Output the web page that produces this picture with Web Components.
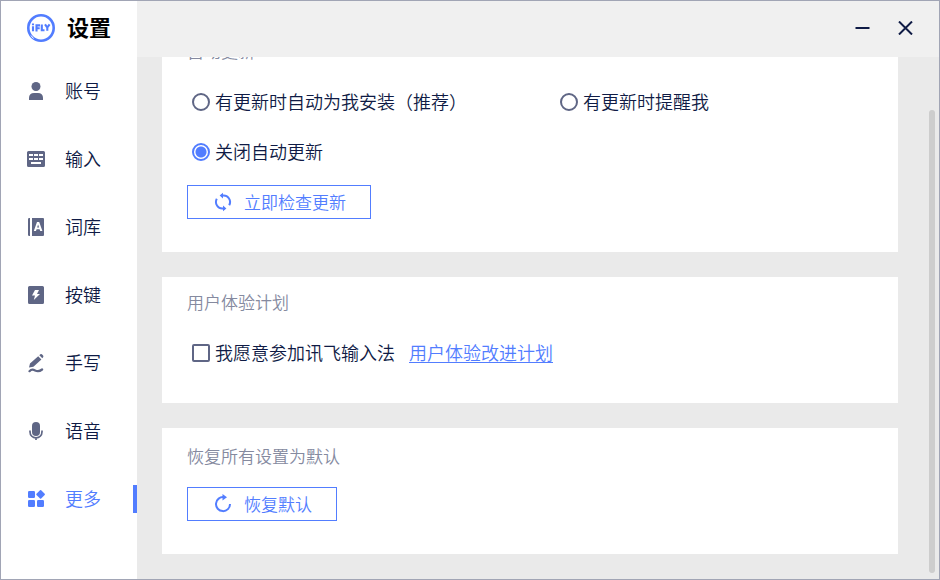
<!DOCTYPE html>
<html lang="zh-CN">
<head>
<meta charset="utf-8">
<title>设置</title>
<style>
  html, body { height: 100%; margin: 0; }
  body {
    --blue: #527dff;
    --ink: #0f1b45;
    --slate: #5f6685;
    --muted: #858a9f;
    font-family: "Noto Sans CJK SC", "Noto Sans", sans-serif;
    font-weight: 350;
    font-size: 18px;
    line-height: 24px;
    color: var(--ink);
  }
</style>
</head>
<body>
<settings-window>
  <side-bar slot="side">
    <brand-mark slot="brand">设置</brand-mark>
    <nav-item icon="account">账号</nav-item>
    <nav-item icon="keyboard">输入</nav-item>
    <nav-item icon="lexicon">词库</nav-item>
    <nav-item icon="keys">按键</nav-item>
    <nav-item icon="pen">手写</nav-item>
    <nav-item icon="voice">语音</nav-item>
    <nav-item icon="more" active>更多</nav-item>
  </side-bar>
  <window-bar slot="bar"></window-bar>
  <scroll-pane>
    <setting-card heading="自动更新">
      <update-choices></update-choices>
      <action-button icon="sync" wide>立即检查更新</action-button>
    </setting-card>
    <setting-card heading="用户体验计划">
      <check-option>我愿意参加讯飞输入法<a slot="more" href="#plan">用户体验改进计划</a></check-option>
    </setting-card>
    <setting-card heading="恢复所有设置为默认" compact>
      <action-button icon="reset">恢复默认</action-button>
    </setting-card>
  </scroll-pane>
</settings-window>

<script>
const icons = {
  account: '<circle cx="10" cy="5.500" r="4.500"/><path d="M3 19v-2.200C3 13.800 5 12 8 12h4c3 0 5 1.800 5 4.800V19z"/>',
  keyboard: '<path fill-rule="evenodd" d="M2.500 2h15A1.500 1.500 0 0 1 19 3.500v13a1.500 1.500 0 0 1-1.500 1.500h-15A1.500 1.500 0 0 1 1 16.500v-13A1.500 1.500 0 0 1 2.500 2zM3 5v2h4V5zm5 0v2h4V5zm5 0v2h4V5zM3 9v2h4V9zm5 0v2h4V9zm5 0v2h4V9zM5 13v2h10v-2z"/>',
  lexicon: '<path d="M3.200 1H4v18h-.8A1.200 1.200 0 0 1 2 17.800V2.200A1.200 1.200 0 0 1 3.200 1z"/><path fill-rule="evenodd" d="M6 1h11a1 1 0 0 1 1 1v16a1 1 0 0 1-1 1H6zM11 5 7.800 14H10l.6-1.700h3l.6 1.700h2.200L13.200 5zm1.100 2.600 1 3h-2z"/>',
  keys: '<path fill-rule="evenodd" d="M3.500 1h13A1.500 1.500 0 0 1 18 2.500v15a1.500 1.500 0 0 1-1.500 1.500h-13A1.500 1.500 0 0 1 2 17.500v-15A1.500 1.500 0 0 1 3.500 1zM9 5 6 10.500h3L7.800 15 14 9h-3l2-4z"/>',
  pen: '<path d="m12.200 3.200 3.200 3.200-8 7.400L3 14.600l1-4zM13.300 2.200l1-.9q.8-.6 1.600 0l1.200 1.200q.7.800 0 1.700l-.8 1z"/><path d="M3.500 18.200c1.800-2 3.800-1.700 5.600-.8 2 1 4.500 1 7-.9" fill="none" stroke="currentColor" stroke-width="2.200" stroke-linecap="round"/>',
  voice: '<rect x="6" y="1" width="8" height="14" rx="4"/><path d="M4 9.500v1.300c0 3.700 2.700 6 6 6s6-2.300 6-6V9.500M10 17v2" fill="none" stroke="currentColor" stroke-width="1.700"/>',
  more: '<rect x="2" y="2" width="7" height="7" rx="1.200"/><rect x="2" y="11" width="7" height="7" rx="1.200"/><rect x="11" y="11" width="7" height="7" rx="1.200"/><rect x="11.300" y="2.100" width="6.600" height="6.600" rx=".8" transform="rotate(45 14.600 5.400)"/>',
  sync: '<path d="M8 3.600h1.500a6.500 6.500 0 0 1 6.700 9.600M12 16.400h-1.500A6.500 6.500 0 0 1 3.800 6.800" fill="none" stroke="currentColor" stroke-width="2"/><path d="M10 .8v5.600L6.600 3.600zM10 13.600v5.600l3.400-2.800z"/>',
  reset: '<path d="M11 3.200A7 7 0 1 0 17 10" fill="none" stroke="currentColor" stroke-width="2"/><path d="M9.500 0v6.400L14 3.200z"/>'
};
const glyph = name => `<svg class="glyph" viewBox="0 0 20 20" width="20" height="20" fill="currentColor" aria-hidden="true">${icons[name]}</svg>`;

function define(name, render) {
  customElements.define(name, class extends HTMLElement {
    constructor() {
      super();
      this.attachShadow({ mode: 'open' });
    }
    connectedCallback() {
      this.shadowRoot.innerHTML = '<style>*{box-sizing:border-box}svg{display:block;flex:none}</style>' + render(this);
    }
  });
}

const optionStyle = `
  label { display: flex; align-items: center; gap: 5px; height: 50px; white-space: nowrap; }
  span { padding-bottom: 2px; }
  input { appearance: none; flex: none; width: 18px; height: 18px; margin: 0; border: 2px solid var(--slate); background: #fff; }
  input[type=radio] { border-radius: 50%; }
  input[type=checkbox] { border-radius: 2px; }
  input:checked { border-color: var(--blue); background: radial-gradient(circle, var(--blue) 5px, #fff 6px); }
`;

define('settings-window', () => `
  <style>
    :host { display: grid; grid-template: 56px minmax(0, 1fr) / 136px minmax(0, 1fr); box-sizing: border-box; height: 100vh; border: 1px solid #a1a5b5; background: #eaeaea; }
    slot[name=side]::slotted(*) { grid-row: 1 / 3; }
  </style>
  <slot name="side"></slot><slot name="bar"></slot><slot></slot>`);

define('side-bar', () => `
  <style>
    :host { display: block; background: #fff; }
    nav { display: flex; flex-direction: column; }
  </style>
  <slot name="brand"></slot>
  <nav aria-label="设置"><slot></slot></nav>`);

define('brand-mark', () => `
  <style>
    :host { display: flex; align-items: center; gap: 12px; height: 56px; padding: 0 0 2px 26px; box-sizing: border-box; color: #000; }
    h1 { margin: 0; padding-bottom: 4px; font-size: 22px; font-weight: 700; line-height: 32px; }
  </style>
  <svg width="28" height="28" viewBox="0 0 28 28" fill="none" stroke="#527dff" aria-hidden="true">
    <circle cx="14" cy="14" r="12.700" stroke-width="2.600"/>
    <path d="m4 21.500 2.500 3" stroke="#fff" stroke-width="1"/>
    <path d="M6 12.300v4.900M6 9.600v1.700M9.500 17.400v-6h3.500M9.500 14.300h3.200M14.800 10.500v5.700h2.700M18 10.300l2.300 3.200 2.300-3.200M20.300 13v3.700" stroke-width="2.100"/>
  </svg>
  <h1><slot></slot></h1>`);

define('nav-item', el => `
  <style>
    :host { display: block; --tone: var(--ink); --mark: var(--slate); }
    :host([active]) { --tone: var(--blue); --mark: var(--blue); }
    a { display: flex; align-items: center; height: 68px; padding-left: 25px; color: var(--tone); text-decoration: none; }
    span { padding-bottom: 2px; }
    .glyph { color: var(--mark); margin-right: 19px; }
    :host([active]) a::after { content: ""; width: 4px; height: 28px; margin-left: auto; background: var(--blue); }
  </style>
  <a href="#${el.getAttribute('icon')}"${el.hasAttribute('active') ? ' aria-current="page"' : ''}>${glyph(el.getAttribute('icon'))}<span><slot></slot></span></a>`);

define('window-bar', () => `
  <style>
    :host { display: flex; justify-content: flex-end; padding: 0 12px 2px 0; background: #f0f0f0; }
    button { display: flex; align-items: center; justify-content: center; width: 43px; padding: 0; border: 0; background: none; color: var(--ink); }
  </style>
  <button type="button" aria-label="最小化"><svg width="15" height="14" viewBox="0 0 15 14" fill="none" stroke="currentColor" stroke-width="2"><path d="M.5 7h14"/></svg></button>
  <button type="button" aria-label="关闭"><svg width="15" height="14" viewBox="0 0 15 14" fill="none" stroke="currentColor" stroke-width="2"><path d="m1 .5 13 13M14 .5l-13 13"/></svg></button>`);

/* A reversed column makes the pane open at the end of its content. */
define('scroll-pane', () => `
  <style>
    :host { display: flex; min-height: 0; }
    .view { flex: 1; min-width: 0; display: flex; flex-direction: column-reverse; overflow-y: auto; scrollbar-width: none; }
    .stack { display: flex; flex-direction: column; gap: 25px; padding: 25px 31px 25px 25px; }
    .rail { display: flex; width: 10px; padding: 53px 4px 6px 0; }
    .thumb { flex: 1; border-radius: 3px; background: #cdcdcd; }
  </style>
  <div class="view"><div class="stack"><slot></slot></div></div>
  <div class="rail" aria-hidden="true"><div class="thumb"></div></div>`);

define('setting-card', el => `
  <style>
    :host { display: block; padding: 13px 0 25px; background: #fff; }
    :host([compact]) { padding-top: 16px; }
    h2 { margin: 0 25px 14px; font-size: 17px; font-weight: inherit; line-height: 24px; color: var(--muted); }
    :host([compact]) h2 { margin-bottom: 11px; }
  </style>
  <section><h2>${el.getAttribute('heading')}</h2><slot></slot></section>`);

define('update-choices', () => `
  <style>${optionStyle}
    :host { display: grid; grid-template-columns: 1fr 1fr; }
    label { padding-left: 30px; }
  </style>
  <label><input type="radio" name="update"><span>有更新时自动为我安装（推荐）</span></label>
  <label><input type="radio" name="update"><span>有更新时提醒我</span></label>
  <label><input type="radio" name="update" checked><span>关闭自动更新</span></label>`);

define('check-option', () => `
  <style>${optionStyle}
    :host { display: flex; align-items: center; gap: 14px; padding-left: 30px; }
    ::slotted(a) { padding-bottom: 2px; color: var(--blue); text-decoration: underline 1px; text-underline-offset: 2px; }
  </style>
  <label><input type="checkbox"><span><slot></slot></span></label>
  <slot name="more"></slot>`);

define('action-button', el => `
  <style>
    :host { display: block; padding: 8px 25px; }
    button { display: flex; align-items: center; gap: 11px; height: 34px; min-width: 150px; padding: 0 24px 0 25px; border: 1px solid var(--blue); background: #fff; color: var(--blue); font: inherit; font-size: 17px; line-height: 24px; }
    :host([wide]) button { min-width: 184px; }
  </style>
  <button type="button">${glyph(el.getAttribute('icon'))}<span><slot></slot></span></button>`);
</script>
</body>
</html>
